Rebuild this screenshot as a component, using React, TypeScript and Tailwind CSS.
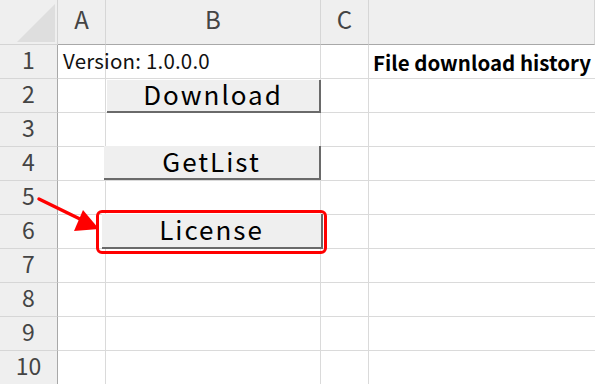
import React from "react";

const font = { fontFamily: '"Noto Sans CJK JP", "Noto Sans", sans-serif' };

const rows = [1, 2, 3, 4, 5, 6, 7, 8, 9, 10];

function Btn({ label, cls }: { label: string; cls: string }) {
  return (
    <div
      className={`absolute flex items-center justify-center pb-[3px] bg-[#efefef] border-r-2 border-b-2 border-[#6a6a6a] text-[26px] leading-none text-black tracking-[2px] ${cls}`}
      style={font}
    >
      {label}
    </div>
  );
}

export default function App() {
  return (
    <div className="relative w-[595px] h-[384px] overflow-hidden bg-white" style={font}>
      <div className="grid grid-cols-[58px_48px_215px_48px_226px] grid-rows-[45px_repeat(10,34px)]">
        <div className="relative bg-[#efefef] border-r border-b border-[#d4d4d4]">
          <svg className="absolute left-[17px] top-[4px]" width="39" height="39" viewBox="0 0 39 39">
            <polygon points="0,38 38,0 38,38" fill="#dedede" />
          </svg>
        </div>
        {["A", "B", "C", ""].map((c, i) => (
          <div
            key={i}
            className="flex items-start justify-center pt-[1px] bg-[#efefef] border-r border-b border-b-[#a8a8a8] border-r-[#d6d6d6] text-[24px] text-[#444444]"
          >
            {c}
          </div>
        ))}
        {rows.map((r) => (
          <React.Fragment key={r}>
            <div className="flex items-center justify-center pb-[5px] bg-[#efefef] border-r border-b border-r-[#a8a8a8] border-b-[#d6d6d6] text-[23px] text-[#444444]">
              {r}
            </div>
            <div className="border-r border-b border-[#dadada]" />
            <div
              className={`border-r border-b border-[#dadada] ${r === 1 ? "relative" : ""}`}
            >
              {r === 1 && (
                <span className="absolute left-[-43px] top-[0px] whitespace-nowrap text-[20.5px] tracking-[0.2px] text-[#111111]">
                  Version: 1.0.0.0
                </span>
              )}
            </div>
            <div className="border-r border-b border-[#dadada]" />
            <div className="border-b border-[#dadada] flex items-end pl-[4px]">
              {r === 1 && (
                <span className="whitespace-nowrap text-[20.5px] font-bold text-black leading-[32px]">
                  File download history
                </span>
              )}
            </div>
          </React.Fragment>
        ))}
      </div>

      <Btn label="Download" cls="left-[107px] top-[80px] w-[214px] h-[33px]" />
      <Btn label="GetList" cls="left-[104px] top-[146px] w-[217px] h-[34px]" />
      <Btn label="License" cls="left-[102px] top-[214px] w-[221px] h-[35px]" />

      <div className="absolute left-[96px] top-[210px] w-[231px] h-[44px] rounded-[6px] border-[3.5px] border-[#ff0000]" />

      <svg className="absolute left-0 top-0" width="595" height="384" viewBox="0 0 595 384">
        <line x1="39" y1="199" x2="82" y2="220" stroke="#ff0000" strokeWidth="3.5" strokeLinecap="round" />
        <polygon points="99,229 74,231 83,210" fill="#ff0000" />
      </svg>
    </div>
  );
}
